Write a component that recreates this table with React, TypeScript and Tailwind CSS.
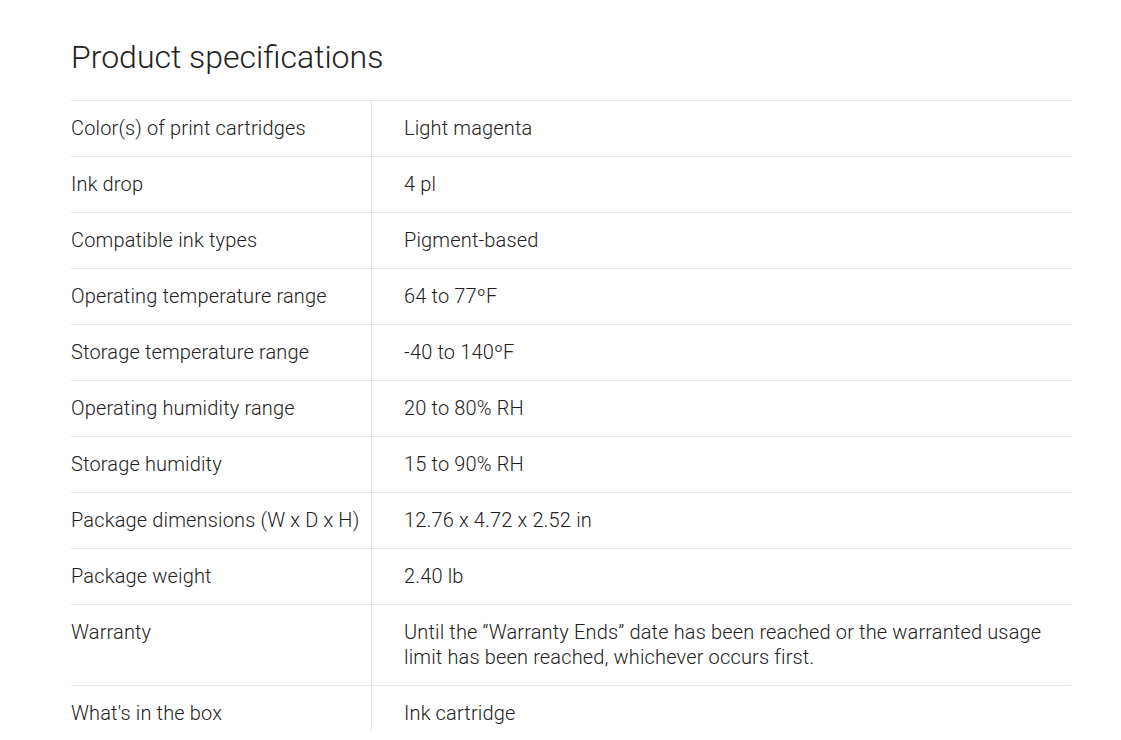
const specs: { label: string; value: React.ReactNode }[] = [
  { label: "Color(s) of print cartridges", value: "Light magenta" },
  { label: "Ink drop", value: "4 pl" },
  { label: "Compatible ink types", value: "Pigment-based" },
  { label: "Operating temperature range", value: "64 to 77ºF" },
  { label: "Storage temperature range", value: "-40 to 140ºF" },
  { label: "Operating humidity range", value: "20 to 80% RH" },
  { label: "Storage humidity", value: "15 to 90% RH" },
  { label: "Package dimensions (W x D x H)", value: "12.76 x 4.72 x 2.52 in" },
  { label: "Package weight", value: "2.40 lb" },
  {
    label: "Warranty",
    value: (
      <>
        Until the “Warranty Ends” date has been reached or the warranted usage
        <br />
        limit has been reached, whichever occurs first.
      </>
    ),
  },
  { label: "What's in the box", value: "Ink cartridge" },
];

export default function App() {
  return (
    <div className="min-h-[740px] bg-white font-['Roboto','Liberation_Sans',sans-serif] font-light text-[#212121]">
      <section className="pl-[71px] pt-[37px]">
        <h2 className="mb-[23px] text-[32px] leading-[40px] font-light">
          Product specifications
        </h2>
        <div className="w-[1000px] border-t border-[#e5e5e5]">
          {specs.map((s, i) => {
            const last = i === specs.length - 1;
            return (
              <div
                key={s.label}
                className={
                  last
                    ? "flex text-[20px] leading-[25px] tracking-[0.15px]"
                    : "flex border-b border-[#e5e5e5] text-[20px] leading-[25px] tracking-[0.15px]"
                }
              >
                <div
                  className={
                    last
                      ? "w-[301px] shrink-0 border-r border-[#e5e5e5] pt-[15px] pb-[5px]"
                      : "w-[301px] shrink-0 border-r border-[#e5e5e5] py-[15px]"
                  }
                >
                  {s.label}
                </div>
                <div
                  className={
                    last
                      ? "flex-1 pl-8 pr-4 pt-[15px] pb-[5px]"
                      : "flex-1 pl-8 pr-4 py-[15px]"
                  }
                >
                  {s.value}
                </div>
              </div>
            );
          })}
        </div>
      </section>
    </div>
  );
}
